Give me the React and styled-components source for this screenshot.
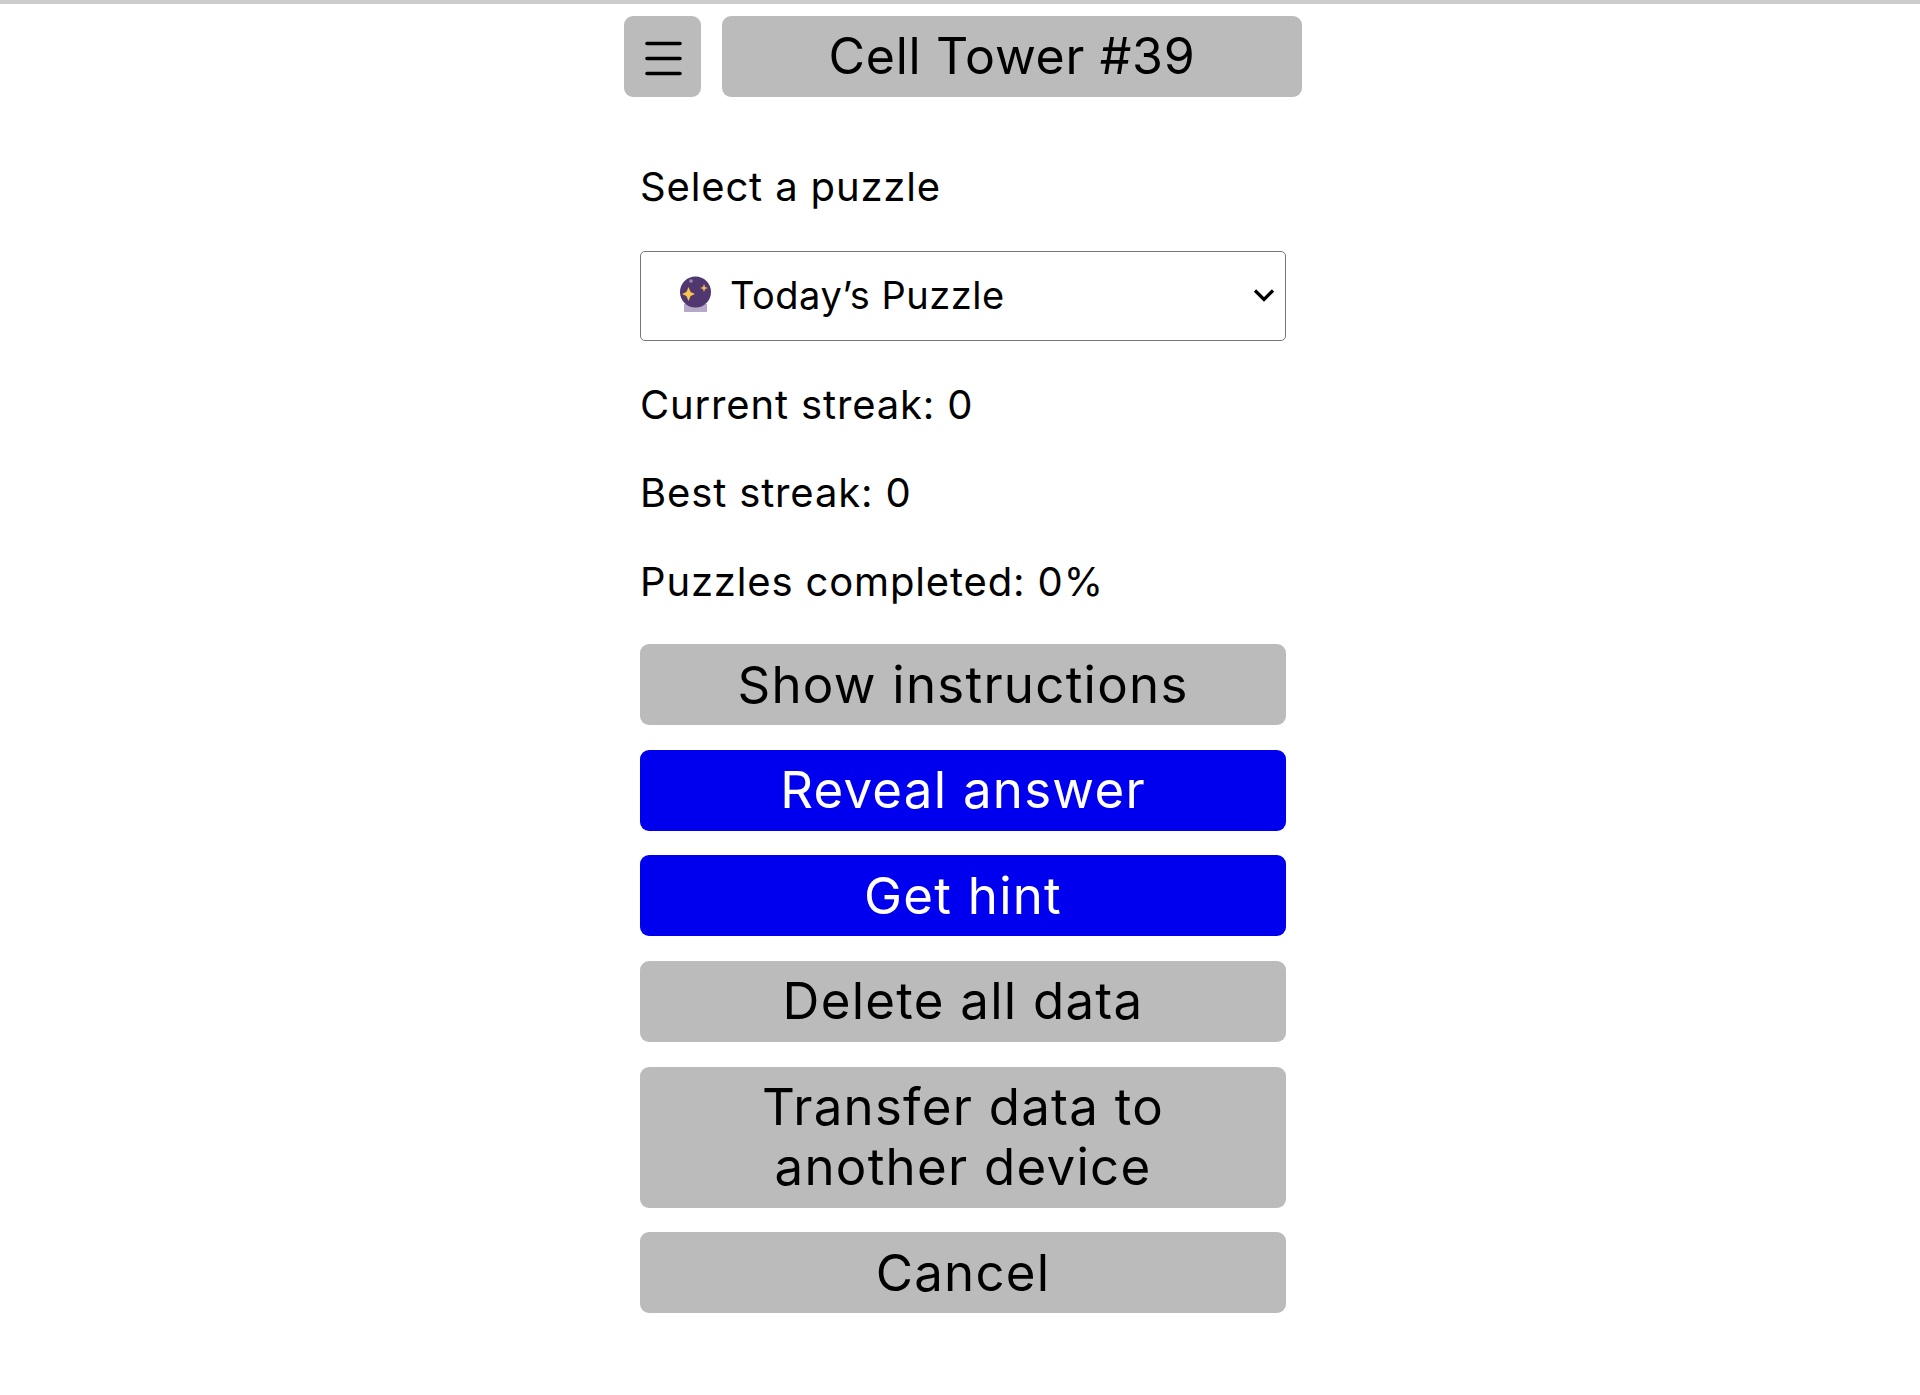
import React from "react";
import styled, { createGlobalStyle } from "styled-components";

const Global = createGlobalStyle`
  html, body { margin: 0; padding: 0; background: #fff; }
  body { font-family: Inter, "Noto Sans", "Liberation Sans", sans-serif; color: #000; }
`;

const Page = styled.div`
  min-height: 1395px;
  box-sizing: border-box;
  border-top: 4px solid #cccccc;
  display: flex;
  flex-direction: column;
  align-items: center;
  padding: 12px 0 0 6px;
`;

const Header = styled.header`
  display: flex;
  gap: 21px;
  width: 678px;
  height: 81px;
`;

const MenuButton = styled.button`
  width: 77px;
  border: 0;
  border-radius: 9px;
  background: #bbbbbb;
  display: flex;
  align-items: center;
  justify-content: center;
  padding: 3px 0 0 2px;
`;

const Title = styled.h1`
  flex: 1;
  margin: 0;
  padding-bottom: 2px;
  border-radius: 9px;
  background: #bbbbbb;
  display: flex;
  align-items: center;
  justify-content: center;
  font-size: 50px;
  font-weight: 400;
  letter-spacing: 0.7px;
`;

const Content = styled.main`
  width: 646px;
  margin-top: 66px;
  display: flex;
  flex-direction: column;
  gap: 38px;
`;

const Fields = styled.section`
  display: flex;
  flex-direction: column;
  gap: 40.8px;
`;

const Line = styled.div`
  font-size: 40px;
  line-height: 48px;
  letter-spacing: 0.85px;
`;

const Select = styled.div`
  box-sizing: border-box;
  height: 90px;
  margin: -1px 0 -1px;
  border: 1.5px solid #767676;
  border-radius: 5px;
  display: flex;
  align-items: center;
  padding: 0 10px 2px 38px;
  font-size: 38px;
  letter-spacing: 0.5px;
`;

const SelectText = styled.span`
  flex: 1;
  margin-left: 18px;
`;

const Actions = styled.section`
  display: flex;
  flex-direction: column;
  gap: 24.6px;
`;

const ActionButton = styled.button`
  border: 0;
  border-radius: 9px;
  padding: 10.5px 60px;
  font: inherit;
  font-size: 51px;
  line-height: 60px;
  letter-spacing: 1.25px;
  color: ${(p) => (p.$primary ? "#ffffff" : "#000000")};
  background: ${(p) => (p.$primary ? "#0000ee" : "#bbbbbb")};
`;

const Hamburger = () => (
  <svg width="37" height="37" viewBox="0 0 37 37" aria-hidden="true">
    <path d="M2 3.5H35M2 18.5H35M2 33.5H35" stroke="#000" strokeWidth="3.6" strokeLinecap="round" fill="none" />
  </svg>
);

const CrystalBall = () => (
  <svg width="33" height="37" viewBox="0 0 33 37" aria-hidden="true">
    <rect x="5" y="28" width="23" height="8" fill="#b6a8c8" />
    <circle cx="16.5" cy="16" r="15.5" fill="#51376f" />
    <path d="M9.5 11 L11.6 15.9 L16 18 L11.6 20.1 L9.5 25 L7.4 20.1 L3 18 L7.4 15.9 Z" fill="#f7c64d" />
    <path d="M25 8 L26.2 11 L29 12 L26.2 13 L25 16 L23.8 13 L21 12 L23.8 11 Z" fill="#e8b85a" />
    <circle cx="12" cy="5" r="1.8" fill="#9c89b5" />
  </svg>
);

const Chevron = () => (
  <svg width="22" height="14" viewBox="0 0 22 14" aria-hidden="true">
    <path d="M2 2.5 L11 11.5 L20 2.5" stroke="#000" strokeWidth="3.2" fill="none" />
  </svg>
);

export default function App() {
  return (
    <Page>
      <Global />
      <Header>
        <MenuButton aria-label="Menu"><Hamburger /></MenuButton>
        <Title>Cell Tower #39</Title>
      </Header>
      <Content>
        <Fields>
          <Line>Select a puzzle</Line>
          <Select>
            <CrystalBall />
            <SelectText>Today’s Puzzle</SelectText>
            <Chevron />
          </Select>
          <Line>Current streak: 0</Line>
          <Line>Best streak: 0</Line>
          <Line>Puzzles completed: 0%</Line>
        </Fields>
        <Actions>
          <ActionButton>Show instructions</ActionButton>
          <ActionButton $primary>Reveal answer</ActionButton>
          <ActionButton $primary>Get hint</ActionButton>
          <ActionButton>Delete all data</ActionButton>
          <ActionButton>Transfer data to another device</ActionButton>
          <ActionButton>Cancel</ActionButton>
        </Actions>
      </Content>
    </Page>
  );
}
